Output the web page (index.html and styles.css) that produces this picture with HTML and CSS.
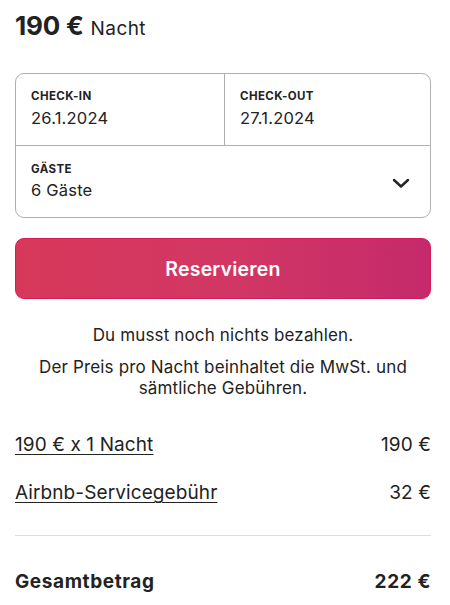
FILE: index.html
```html
<!DOCTYPE html>
<html lang="de">
<head>
<meta charset="utf-8">
<link rel="stylesheet" href="styles.css">
</head>
<body>
<div class="panel">
  <div class="price"><span class="amount">190 €</span> <span class="per">Nacht</span></div>

  <div class="picker">
    <div class="dates">
      <div class="cell">
        <div class="label">CHECK-IN</div>
        <div class="value">26.1.2024</div>
      </div>
      <div class="cell cell-right">
        <div class="label">CHECK-OUT</div>
        <div class="value">27.1.2024</div>
      </div>
    </div>
    <div class="guests">
      <div>
        <div class="label">GÄSTE</div>
        <div class="value">6 Gäste</div>
      </div>
      <svg class="chevron" width="18" height="12" viewBox="0 0 18 12" aria-hidden="true">
        <path d="M2 3 L9 9.5 L16 3" fill="none" stroke="#222" stroke-width="2.4" stroke-linecap="round" stroke-linejoin="round"/>
      </svg>
    </div>
  </div>

  <button class="reserve">Reservieren</button>

  <p class="note">Du musst noch nichts bezahlen.</p>
  <p class="note note-2">Der Preis pro Nacht beinhaltet die MwSt. und sämtliche Gebühren.</p>

  <div class="rows">
    <div class="row"><span class="link">190 € x 1 Nacht</span><span>190 €</span></div>
    <div class="row"><span class="link">Airbnb-Servicegebühr</span><span>32 €</span></div>
  </div>
  <hr class="sep">
  <div class="row total"><span>Gesamtbetrag</span><span>222 €</span></div>
</div>
</body>
</html>
```

FILE: styles.css
```css
* { box-sizing: border-box; }
html, body { margin: 0; padding: 0; background: #fff; }
body {
  font-family: Inter, "Noto Sans", sans-serif;
  color: #222222;
}
.panel { padding: 10px 19px 0 15px; }
.price { line-height: 32px; height: 32px; display: flex; align-items: baseline; gap: 7px; }
.amount { font-size: 26px; font-weight: 700; letter-spacing: -0.2px; }
.per { font-size: 19px; font-weight: 400; letter-spacing: 0.4px; }

.picker {
  margin-top: 31px;
  border: 1px solid #b0b0b0;
  border-radius: 9px;
  height: 145px;
  display: flex;
  flex-direction: column;
}
.dates { display: flex; height: 72px; border-bottom: 1px solid #b0b0b0; }
.cell { flex: 0 0 208px; padding: 15px 15px 0; }
.cell-right { flex: 1; border-left: 1px solid #b0b0b0; }
.label { font-size: 11.5px; font-weight: 700; line-height: 14px; letter-spacing: 0.4px; }
.value { font-size: 16.5px; line-height: 22px; margin-top: 4px; letter-spacing: 0.2px; }
.guests { flex: 1; display: flex; align-items: center; justify-content: space-between; padding: 0 20px 0 15px; }
.guests .value { margin-top: 3px; }
.chevron { display: block; margin-top: 2px; }

.reserve {
  display: block;
  width: 100%;
  height: 61px;
  margin-top: 20px;
  border: 1px solid #d5195a;
  border-radius: 9px;
  background: linear-gradient(90deg, #d7385a 0%, #d23764 50%, #c42a6a 100%);
  color: #fff;
  font-family: inherit;
  font-size: 19.5px;
  font-weight: 600;
  letter-spacing: 0.2px;
}

.note { margin: 0; text-align: center; font-size: 17px; line-height: 21px; letter-spacing: 0.15px; }
.note:first-of-type { margin-top: 26px; }
.note-2 { margin-top: 11px; padding: 0 10px; }

.rows { margin-top: 35px; display: flex; flex-direction: column; gap: 26px; }
.row { display: flex; justify-content: space-between; font-size: 19px; line-height: 22px; letter-spacing: 0.1px; }
.link { text-decoration: underline; text-underline-offset: 3px; text-decoration-thickness: 1px; }
.sep { border: 0; border-top: 1px solid #dddddd; margin: 31px 0 35px; }
.total { font-weight: 700; letter-spacing: 0.6px; }
```
